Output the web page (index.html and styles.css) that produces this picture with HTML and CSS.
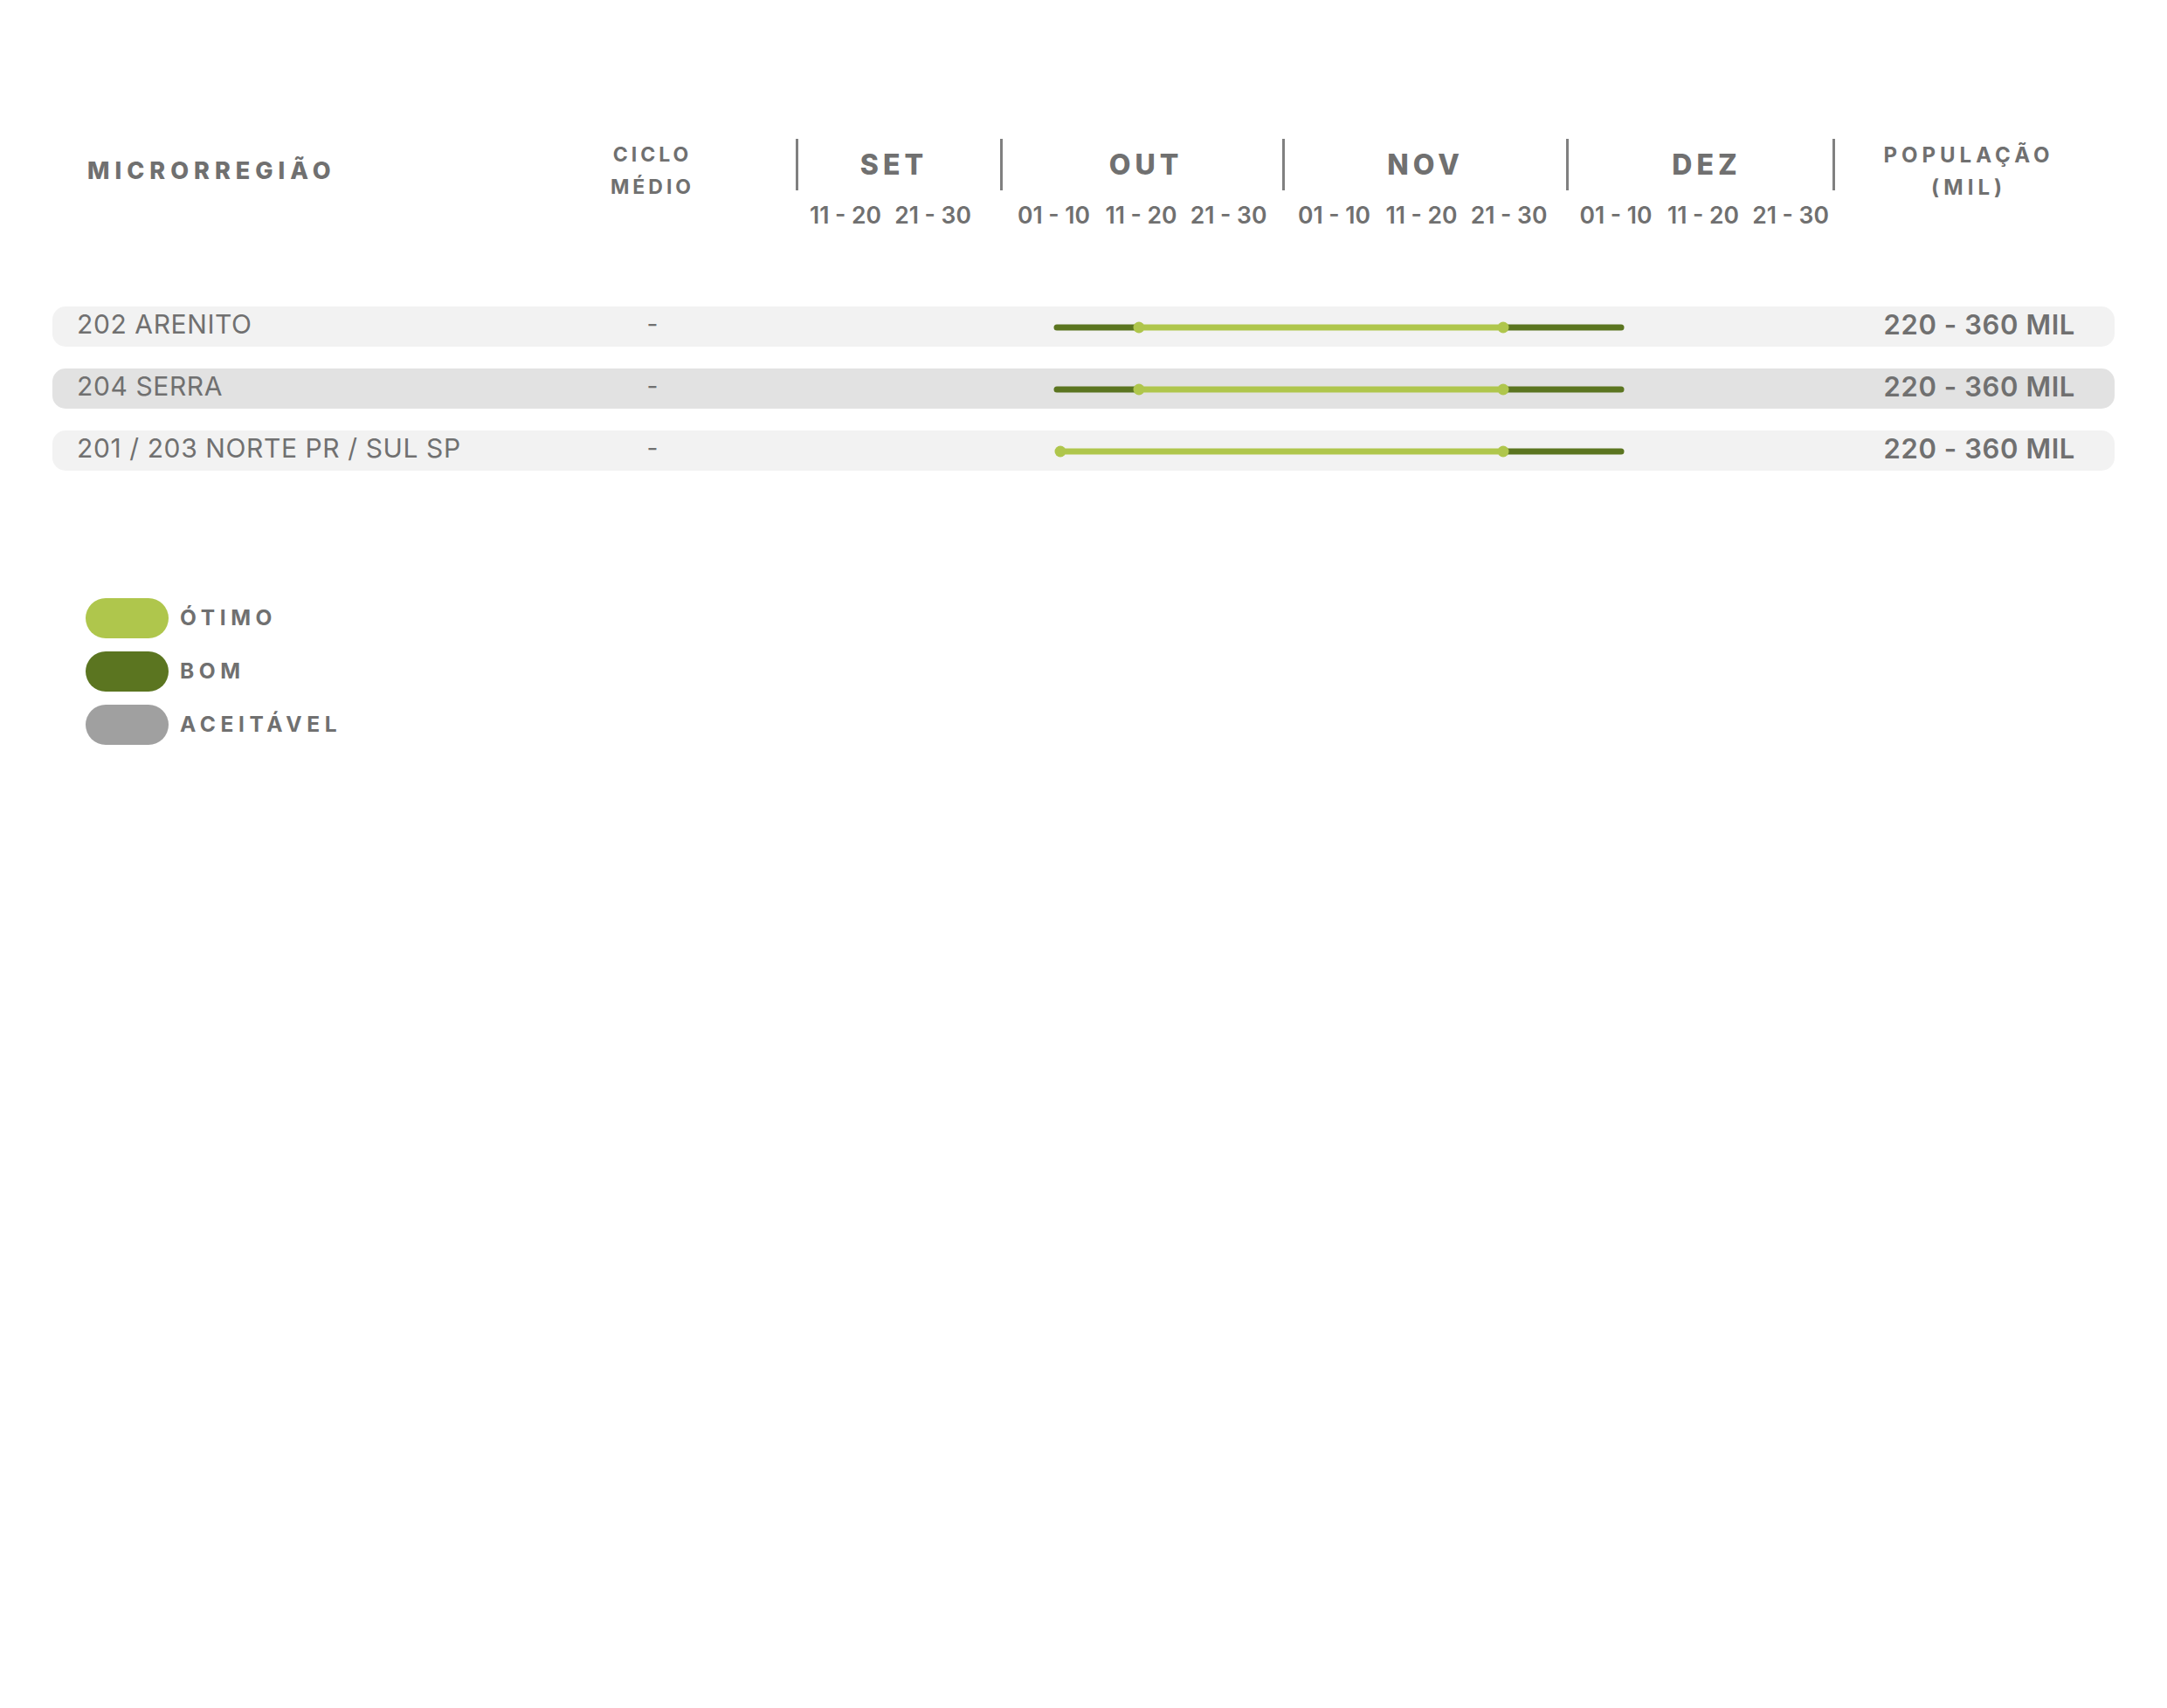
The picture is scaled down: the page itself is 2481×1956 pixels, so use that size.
FILE: index.html
```html
<!DOCTYPE html>
<html lang="pt">
<head>
<meta charset="utf-8">
<title>Microrregiões</title>
<link rel="stylesheet" href="styles.css">
</head>
<body>
<div class="page">
  <div class="grid header">
    <div class="h-name">MICRORREGIÃO</div>
    <div class="h-ciclo">CICLO<br>MÉDIO</div>
    <div class="months">
      <div class="month m-set">
        <div class="m-label">SET</div>
        <div class="decades"><span>11 - 20</span><span>21 - 30</span></div>
      </div>
      <div class="month m-out">
        <div class="m-label">OUT</div>
        <div class="decades"><span>01 - 10</span><span>11 - 20</span><span>21 - 30</span></div>
      </div>
      <div class="month m-nov">
        <div class="m-label">NOV</div>
        <div class="decades"><span>01 - 10</span><span>11 - 20</span><span>21 - 30</span></div>
      </div>
      <div class="month m-dez">
        <div class="m-label last">DEZ</div>
        <div class="decades"><span>01 - 10</span><span>11 - 20</span><span>21 - 30</span></div>
      </div>
    </div>
    <div class="h-pop">POPULAÇÃO<br>(MIL)</div>
  </div>

  <div class="rows">
    <div class="grid row light">
      <div class="r-name">202 ARENITO</div>
      <div class="r-ciclo">-</div>
      <div class="r-bar">
        <svg class="bar" width="1190" height="45" viewBox="0 0 1190 45">
          <line class="dark" x1="299" y1="23" x2="393" y2="23"/>
          <line class="dark" x1="810" y1="23" x2="945" y2="23"/>
          <line class="lite" x1="393" y1="23" x2="810" y2="23"/>
          <circle class="dot" cx="393" cy="23" r="6.5"/>
          <circle class="dot" cx="810" cy="23" r="6.5"/>
        </svg>
      </div>
      <div class="r-pop">220 - 360 MIL</div>
    </div>
    <div class="grid row mid">
      <div class="r-name">204 SERRA</div>
      <div class="r-ciclo">-</div>
      <div class="r-bar">
        <svg class="bar" width="1190" height="45" viewBox="0 0 1190 45">
          <line class="dark" x1="299" y1="23" x2="393" y2="23"/>
          <line class="dark" x1="810" y1="23" x2="945" y2="23"/>
          <line class="lite" x1="393" y1="23" x2="810" y2="23"/>
          <circle class="dot" cx="393" cy="23" r="6.5"/>
          <circle class="dot" cx="810" cy="23" r="6.5"/>
        </svg>
      </div>
      <div class="r-pop">220 - 360 MIL</div>
    </div>
    <div class="grid row light">
      <div class="r-name">201 / 203 NORTE PR / SUL SP</div>
      <div class="r-ciclo">-</div>
      <div class="r-bar">
        <svg class="bar" width="1190" height="45" viewBox="0 0 1190 45">
          <line class="dark" x1="810" y1="23" x2="945" y2="23"/>
          <line class="lite" x1="303" y1="23" x2="810" y2="23"/>
          <circle class="dot" cx="303" cy="23" r="6.5"/>
          <circle class="dot" cx="810" cy="23" r="6.5"/>
        </svg>
      </div>
      <div class="r-pop">220 - 360 MIL</div>
    </div>
  </div>

  <div class="legend">
    <div class="leg-item"><span class="pill p-otimo"></span><span class="leg-label">ÓTIMO</span></div>
    <div class="leg-item"><span class="pill p-bom"></span><span class="leg-label">BOM</span></div>
    <div class="leg-item"><span class="pill p-aceit"></span><span class="leg-label">ACEITÁVEL</span></div>
  </div>
</div>
</body>
</html>
```
FILE: styles.css
```css
html, body {
  margin: 0;
  padding: 0;
  background: #ffffff;
}
body {
  font-family: Inter, "Noto Sans", "DejaVu Sans", sans-serif;
  color: #707070;
}
.page {
  width: 2361px;
  padding: 159px 60px 0 60px;
}
.grid {
  display: grid;
  grid-template-columns: 523px 328px 1190px 320px;
}
.header {
  align-items: start;
}
.h-name {
  padding-left: 40px;
  padding-top: 18px;
  font-size: 27px;
  line-height: 37px;
  font-weight: 800;
  letter-spacing: 6px;
  white-space: nowrap;
}
.h-ciclo, .h-pop {
  text-align: center;
  font-size: 23px;
  line-height: 37px;
  font-weight: 700;
  letter-spacing: 4px;
  white-space: nowrap;
}
.h-pop {
  padding-right: 14px;
  font-size: 24px;
  letter-spacing: 5px;
}
.months {
  display: flex;
}
.m-set { width: 234px; }
.m-out { width: 323px; }
.m-nov { width: 325px; }
.m-dez { width: 308px; }
.m-label {
  height: 59px;
  line-height: 59px;
  border-left: 3px solid #808080;
  text-align: center;
  font-size: 32px;
  font-weight: 800;
  letter-spacing: 5px;
}
.m-set .m-label {
  padding-right: 12px;
}
.m-out .m-label {
  padding-left: 8px;
}
.m-dez .m-label {
  padding-left: 14px;
}
.m-label.last {
  border-right: 3px solid #808080;
}
.decades {
  display: flex;
  justify-content: center;
  margin-top: 13px;
}
.m-set .decades {
  padding-right: 20px;
}
.m-dez .decades {
  padding-left: 6px;
}
.m-nov .decades {
  padding-right: 6px;
}
.decades span {
  width: 100px;
  text-align: center;
  font-size: 26.5px;
  line-height: 30px;
  font-weight: 600;
  white-space: nowrap;
}
.rows {
  margin-top: 90px;
  display: flex;
  flex-direction: column;
  gap: 25px;
}
.row {
  height: 46px;
  border-radius: 15px;
  align-items: center;
}
.row.light { background: #f2f2f2; }
.row.mid { background: #e2e2e2; }
.r-name {
  padding-left: 28px;
  padding-bottom: 6px;
  font-size: 30px;
  font-weight: 400;
  letter-spacing: 0.6px;
  white-space: nowrap;
}
.r-ciclo {
  text-align: center;
  padding-bottom: 6px;
  font-size: 28px;
}
.r-bar {
  height: 46px;
  display: flex;
  align-items: center;
}
.bar {
  display: block;
}
.bar line {
  stroke-width: 7;
  stroke-linecap: round;
}
.bar .dark { stroke: #5b7520; }
.bar .lite { stroke: #afc64c; }
.bar .dot { fill: #afc64c; }
.r-pop {
  text-align: right;
  padding-right: 45px;
  padding-bottom: 6px;
  font-size: 31px;
  font-weight: 600;
  letter-spacing: 0.6px;
  white-space: nowrap;
}
.legend {
  margin-top: 146px;
  margin-left: 38px;
  display: flex;
  flex-direction: column;
  gap: 15px;
}
.leg-item {
  display: flex;
  align-items: center;
  gap: 13px;
}
.pill {
  width: 95px;
  height: 46px;
  border-radius: 23px;
  display: block;
}
.p-otimo { background: #afc64c; }
.p-bom { background: #5b7520; }
.p-aceit { background: #a0a0a0; }
.leg-label {
  font-size: 24.5px;
  font-weight: 700;
  letter-spacing: 5.6px;
  padding-bottom: 3px;
}
```
